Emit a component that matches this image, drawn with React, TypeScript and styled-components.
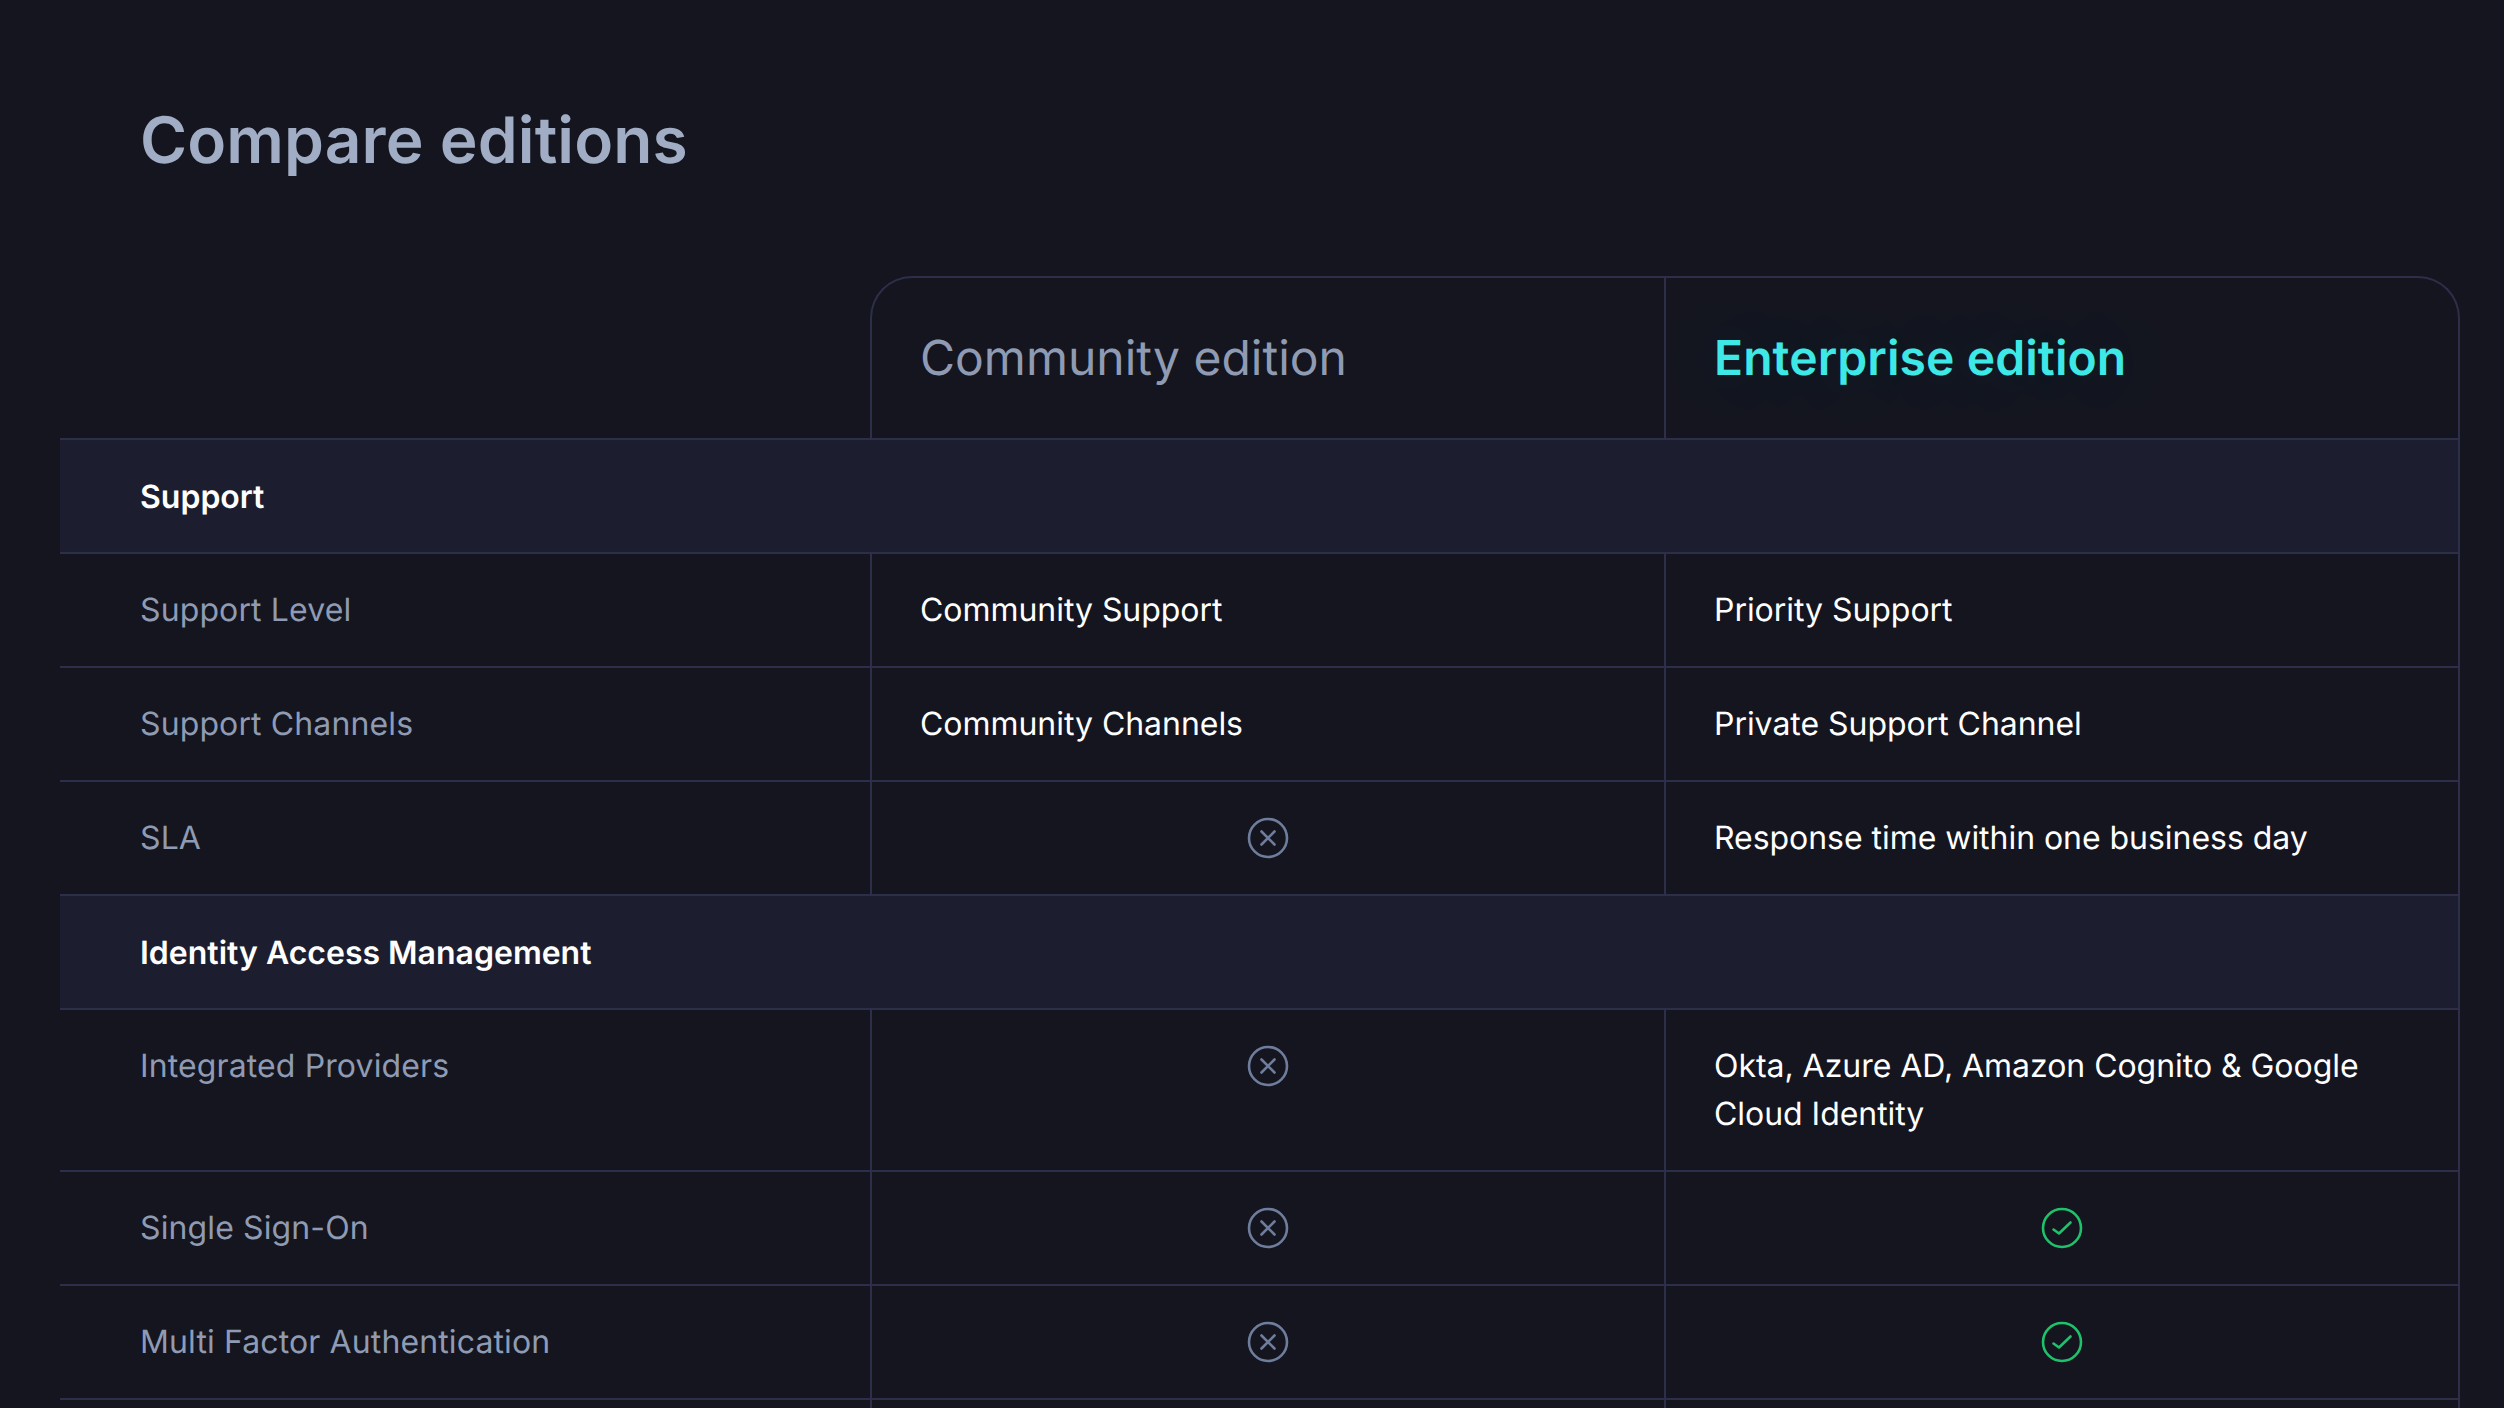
import React from 'react';
import styled, { createGlobalStyle } from 'styled-components';

const GlobalStyle = createGlobalStyle`
  html, body {
    margin: 0;
    height: 100%;
    overflow: hidden;
    background: #14151f;
  }
  body {
    font-family: Inter, "Liberation Sans", sans-serif;
    -webkit-font-smoothing: antialiased;
    text-rendering: geometricPrecision;
  }
`;

const Page = styled.main`
  padding: 0 44px 0 60px;
  height: 1408px;
  overflow: hidden;
  box-sizing: border-box;
`;

const Title = styled.h1`
  margin: 0;
  padding: 101px 0 0 80px;
  height: 276px;
  box-sizing: border-box;
  font-size: 64px;
  line-height: 80px;
  font-weight: 600;
  letter-spacing: 0.1px;
  color: #a0adc4;
`;

const HeaderRow = styled.div`
  display: grid;
  grid-template-columns: 810px 1fr;
`;

const HeaderBox = styled.div`
  grid-column: 2;
  display: grid;
  grid-template-columns: 792px 1fr;
  height: 162px;
  box-sizing: border-box;
  border: solid #2d2f4a;
  border-width: 2px 2px 0 2px;
  border-radius: 42px 42px 0 0;
`;

const HeaderCell = styled.div<{ $accent?: boolean }>`
  display: flex;
  align-items: center;
  padding: 0 0 2px 48px;
  font-size: 48px;
  font-weight: ${p => (p.$accent ? 600 : 400)};
  letter-spacing: ${p => (p.$accent ? '0.09px' : '0')};
  color: ${p => (p.$accent ? '#3de8e6' : '#8f9bb3')};
  border-left: ${p => (p.$accent ? '2px solid #2d2f4a' : 'none')};
  text-shadow: ${p => (p.$accent ? '0 0 70px rgba(61, 232, 230, 0.2)' : 'none')};
`;

const SectionRow = styled.div`
  padding: 0 0 0 80px;
  height: 114px;
  display: flex;
  align-items: center;
  box-sizing: border-box;
  background: #1c1e2f;
  border: solid #2d2f4a;
  border-width: 2px 2px 0 0;
  font-size: 32px;
  font-weight: 600;
  color: #ffffff;
`;

const Row = styled.div`
  display: grid;
  grid-template-columns: 810px 794px 1fr;
  border-top: 2px solid #2d2f4a;
`;

const Cell = styled.div<{ $center?: boolean }>`
  padding: 32px 48px;
  min-height: 48px;
  border-left: 2px solid #2d2f4a;
  font-size: 32px;
  line-height: 48px;
  letter-spacing: -0.04px;
  color: #ffffff;
  display: ${p => (p.$center ? 'flex' : 'block')};
  justify-content: center;
  &:last-child {
    border-right: 2px solid #2d2f4a;
  }
`;

const Label = styled.div`
  padding: 32px 48px 32px 80px;
  font-size: 32px;
  line-height: 48px;
  letter-spacing: 0.12px;
  color: #8f9bb3;
`;

const CrossIcon = () => (
  <svg width="48" height="48" viewBox="0 0 48 48" fill="none" stroke="#6f7d9c" strokeWidth="2.6" strokeLinecap="round">
    <circle cx="24" cy="24" r="19" />
    <path d="M17.5 17.5 L30.5 30.5 M30.5 17.5 L17.5 30.5" />
  </svg>
);

const CheckIcon = () => (
  <svg width="48" height="48" viewBox="0 0 48 48" fill="none" stroke="#1fc16b" strokeWidth="2.6" strokeLinecap="round" strokeLinejoin="round">
    <circle cx="24" cy="24" r="19" />
    <path d="M15.5 25.5 L21 29.5 L32.5 18.5" />
  </svg>
);

type Mark = 'yes' | 'no';

const FeatureRow: React.FC<{ label: string; community?: string | Mark; enterprise?: string | Mark }> = ({ label, community, enterprise }) => {
  const renderCell = (value?: string | Mark) => {
    if (value === 'yes') return <Cell $center><CheckIcon /></Cell>;
    if (value === 'no') return <Cell $center><CrossIcon /></Cell>;
    return <Cell>{value}</Cell>;
  };
  return (
    <Row>
      <Label>{label}</Label>
      {renderCell(community)}
      {renderCell(enterprise)}
    </Row>
  );
};

export default function App() {
  return (
    <Page>
      <GlobalStyle />
      <Title>Compare editions</Title>
      <HeaderRow>
        <HeaderBox>
          <HeaderCell>Community edition</HeaderCell>
          <HeaderCell $accent>Enterprise edition</HeaderCell>
        </HeaderBox>
      </HeaderRow>
      <SectionRow>Support</SectionRow>
      <FeatureRow label="Support Level" community="Community Support" enterprise="Priority Support" />
      <FeatureRow label="Support Channels" community="Community Channels" enterprise="Private Support Channel" />
      <FeatureRow label="SLA" community="no" enterprise="Response time within one business day" />
      <SectionRow>Identity Access Management</SectionRow>
      <FeatureRow label="Integrated Providers" community="no" enterprise="Okta, Azure AD, Amazon Cognito & Google Cloud Identity" />
      <FeatureRow label="Single Sign-On" community="no" enterprise="yes" />
      <FeatureRow label="Multi Factor Authentication" community="no" enterprise="yes" />
      <FeatureRow label="" />
    </Page>
  );
}
